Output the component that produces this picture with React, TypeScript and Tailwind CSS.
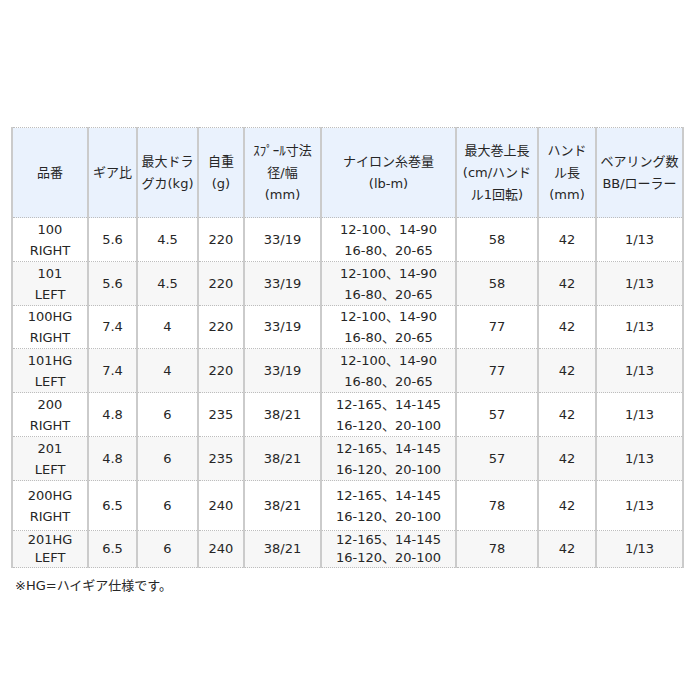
import React from 'react'

interface Row {
  model: [string, string]
  gear: string
  drag: string
  weight: string
  spool: string
  line: [string, string]
  retrieve: string
  handle: string
  bearing: string
  height: string
}

const rows: Row[] = [
  { model: ['100', 'RIGHT'], gear: '5.6', drag: '4.5', weight: '220', spool: '33/19', line: ['12-100、14-90', '16-80、20-65'], retrieve: '58', handle: '42', bearing: '1/13', height: 'h-[44px]' },
  { model: ['101', 'LEFT'], gear: '5.6', drag: '4.5', weight: '220', spool: '33/19', line: ['12-100、14-90', '16-80、20-65'], retrieve: '58', handle: '42', bearing: '1/13', height: 'h-[44px]' },
  { model: ['100HG', 'RIGHT'], gear: '7.4', drag: '4', weight: '220', spool: '33/19', line: ['12-100、14-90', '16-80、20-65'], retrieve: '77', handle: '42', bearing: '1/13', height: 'h-[43px]' },
  { model: ['101HG', 'LEFT'], gear: '7.4', drag: '4', weight: '220', spool: '33/19', line: ['12-100、14-90', '16-80、20-65'], retrieve: '77', handle: '42', bearing: '1/13', height: 'h-[44px]' },
  { model: ['200', 'RIGHT'], gear: '4.8', drag: '6', weight: '235', spool: '38/21', line: ['12-165、14-145', '16-120、20-100'], retrieve: '57', handle: '42', bearing: '1/13', height: 'h-[44px]' },
  { model: ['201', 'LEFT'], gear: '4.8', drag: '6', weight: '235', spool: '38/21', line: ['12-165、14-145', '16-120、20-100'], retrieve: '57', handle: '42', bearing: '1/13', height: 'h-[44px]' },
  { model: ['200HG', 'RIGHT'], gear: '6.5', drag: '6', weight: '240', spool: '38/21', line: ['12-165、14-145', '16-120、20-100'], retrieve: '78', handle: '42', bearing: '1/13', height: 'h-[50px]' },
  { model: ['201HG', 'LEFT'], gear: '6.5', drag: '6', weight: '240', spool: '38/21', line: ['12-165、14-145', '16-120、20-100'], retrieve: '78', handle: '42', bearing: '1/13', height: 'h-[37px]' },
]

const headers: string[][] = [
  ['品番'],
  ['ギア比'],
  ['最大ドラ', 'グカ(kg)'],
  ['自重', '(g)'],
  ['ｽﾌﾟｰﾙ寸法', '径/幅', '(mm)'],
  ['ナイロン糸巻量', '(lb-m)'],
  ['最大巻上長', '(cm/ハンド', 'ル1回転)'],
  ['ハンド', 'ル長', '(mm)'],
  ['ベアリング数', 'BB/ローラー'],
]

const widths = ['w-[76px]', 'w-[49px]', 'w-[61px]', 'w-[46px]', 'w-[77px]', 'w-[135px]', 'w-[82px]', 'w-[58px]', 'w-[87px]']

const cell = 'border-x-2 border-x-[#cbcbcb] border-y border-y-[#bdbdbd] border-dotted [border-left-style:solid] [border-right-style:solid] p-0 text-center align-middle'

function Lines({ items, leading }: { items: string[]; leading: string }) {
  return (
    <>
      {items.map((t, i) => (
        <div key={i} className={leading}>
          {t}
        </div>
      ))}
    </>
  )
}

export default function App() {
  return (
    <div className="w-[700px] h-[700px] bg-white text-[#262626] text-[13px] font-['DejaVu_Sans','Noto_Sans_CJK_JP',sans-serif]">
      <div className="pt-[127px] pl-[11px]">
        <table className="table-fixed border-collapse w-[672px]">
          <colgroup>
            {widths.map((w, i) => (
              <col key={i} className={w} />
            ))}
          </colgroup>
          <thead>
            <tr className="h-[90px] bg-[#eaf2fd]">
              {headers.map((h, i) => (
                <th key={i} className={`${cell} font-normal`}>
                  <Lines items={h} leading="leading-[22px]" />
                </th>
              ))}
            </tr>
          </thead>
          <tbody>
            {rows.map((r, i) => {
              const leading = i === rows.length - 1 ? 'leading-[18px]' : 'leading-[21px]'
              return (
                <tr key={i} className={`${r.height} ${i % 2 === 1 ? 'bg-[#f7f7f7]' : 'bg-white'}`}>
                  <td className={cell}><Lines items={r.model} leading={leading} /></td>
                  <td className={cell}>{r.gear}</td>
                  <td className={cell}>{r.drag}</td>
                  <td className={cell}>{r.weight}</td>
                  <td className={cell}>{r.spool}</td>
                  <td className={cell}><Lines items={r.line} leading={leading} /></td>
                  <td className={cell}>{r.retrieve}</td>
                  <td className={cell}>{r.handle}</td>
                  <td className={cell}>{r.bearing}</td>
                </tr>
              )
            })}
          </tbody>
        </table>
        <p className="mt-[7px] pl-[4px] leading-[22px]">※HG=ハイギア仕様です。</p>
      </div>
    </div>
  )
}
